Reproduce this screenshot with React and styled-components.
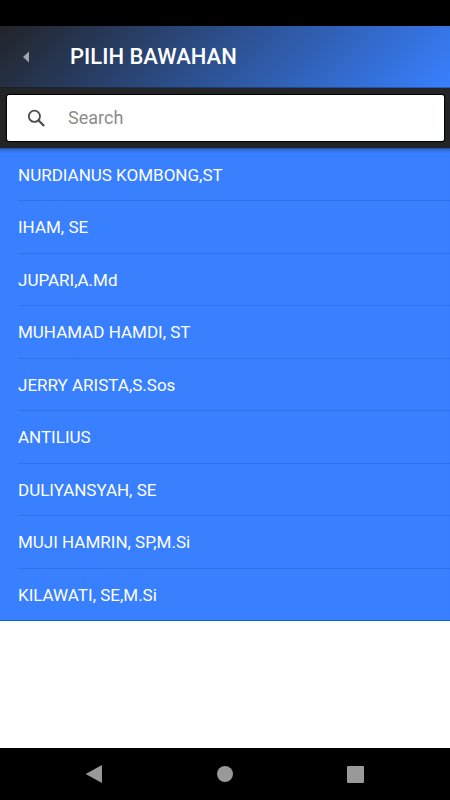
import React, { useState } from "react";
import styled, { createGlobalStyle } from "styled-components";

const GlobalStyle = createGlobalStyle`
  * {
    box-sizing: border-box;
  }

  body {
    margin: 0;
    background-color: white;
    font-family: Roboto, "Liberation Sans", sans-serif;
  }
`;

const Container = styled.div`
  display: flex;
  flex-direction: column;
  min-height: 100vh;
`;

const StatusBar = styled.div`
  height: 26px;
  background-color: black;
`;

const Header = styled.header`
  display: flex;
  align-items: center;
  height: 62px;
  background: linear-gradient(135deg, #222428 0%, #3880ff 100%);
  border-bottom: 1px solid rgba(0, 0, 0, 0.2);
`;

const BackButton = styled.button`
  display: flex;
  align-items: center;
  justify-content: center;
  width: 52px;
  height: 48px;
  padding: 0;
  border: none;
  background: none;
  color: #a0a5ad;
  cursor: pointer;
`;

const Title = styled.h1`
  margin: 0;
  padding-left: 18px;
  font-size: 22px;
  line-height: 26px;
  font-weight: 500;
  color: white;
`;

const SearchBar = styled.div`
  padding: 7px 6px 7px 7px;
  background-color: #222428;
  border-bottom: 1px solid #2b55a0;
`;

const SearchBox = styled.label`
  display: flex;
  align-items: center;
  height: 46px;
  padding-left: 20px;
  border-radius: 2px;
  background-color: white;
  box-shadow: 0 0 1px 1px black;
  color: #4d4d4d;
`;

const SearchInput = styled.input`
  flex: 1;
  min-width: 0;
  height: 44px;
  margin-left: 21px;
  padding: 0 0 2px;
  border: none;
  outline: none;
  background: none;
  font-family: inherit;
  font-size: 18px;
  color: #222428;

  &::placeholder {
    color: #8c8c8c;
    opacity: 1;
  }
`;

const List = styled.ul`
  margin: 0;
  padding: 0;
  list-style: none;
  background-color: #3880ff;
  box-shadow: inset 0 4px 3px -2px rgba(0, 0, 0, 0.2);
`;

const Item = styled.li`
  height: 52px;
  padding-left: 18px;

  &:nth-child(even) {
    height: 53px;
  }

  &:last-child {
    border-bottom: 1px solid #0062e0;
  }
`;

const ItemButton = styled.button`
  display: block;
  width: 100%;
  height: 100%;
  padding: 0;
  border: none;
  border-bottom: 1px solid #3171e0;
  background: none;
  font-family: inherit;
  font-size: 17px;
  text-align: left;
  color: white;
  cursor: pointer;

  ${Item}:last-child & {
    border-bottom: none;
  }
`;

const NavBar = styled.nav`
  display: flex;
  align-items: center;
  justify-content: space-around;
  height: 52px;
  margin-top: auto;
  padding: 0 30px;
  background-color: black;
`;

const NavButton = styled.button`
  display: flex;
  align-items: center;
  justify-content: center;
  width: 48px;
  height: 48px;
  padding: 0;
  border: none;
  background: none;
  color: #999;
  cursor: pointer;
`;

const employees = [
  "NURDIANUS KOMBONG,ST",
  "IHAM, SE",
  "JUPARI,A.Md",
  "MUHAMAD HAMDI, ST",
  "JERRY ARISTA,S.Sos",
  "ANTILIUS",
  "DULIYANSYAH, SE",
  "MUJI HAMRIN, SP,M.Si",
  "KILAWATI, SE,M.Si",
];

const App = () => {
  const [search, setSearch] = useState("");

  const filtered = employees.filter((name) =>
    name.toLowerCase().includes(search.toLowerCase())
  );

  return (
    <Container>
      <GlobalStyle />
      <StatusBar />
      <Header>
        <BackButton aria-label="Back">
          <svg width="8" height="12" viewBox="0 0 8 12" fill="currentColor">
            <path d="M7 .5v11L1 6z" />
          </svg>
        </BackButton>
        <Title>PILIH BAWAHAN</Title>
      </Header>
      <SearchBar>
        <SearchBox>
          <svg width="20" height="20" viewBox="0 0 20 20" fill="none" stroke="currentColor" strokeWidth="1.8">
            <circle cx="7.4" cy="8.3" r="5.6" />
            <path d="M11.4 12.3l5.7 5.7" strokeWidth="2.3" />
          </svg>
          <SearchInput
            type="text"
            placeholder="Search"
            aria-label="Search"
            value={search}
            onChange={(e) => setSearch(e.target.value)}
          />
        </SearchBox>
      </SearchBar>
      <List>
        {filtered.map((name) => (
          <Item key={name}>
            <ItemButton>{name}</ItemButton>
          </Item>
        ))}
      </List>
      <NavBar>
        <NavButton aria-label="Navigate back">
          <svg width="18" height="18" viewBox="0 0 18 18" fill="currentColor">
            <path d="M15 0.5q1-.5 1 .5v16q0 1-1 .5L.5 9.6q-1-.6 0-1.2z" />
          </svg>
        </NavButton>
        <NavButton aria-label="Home">
          <svg width="16" height="16" viewBox="0 0 16 16" fill="currentColor">
            <circle cx="8" cy="8" r="8" />
          </svg>
        </NavButton>
        <NavButton aria-label="Recent apps">
          <svg width="17" height="17" viewBox="0 0 17 17" fill="currentColor">
            <rect width="17" height="17" rx="1" />
          </svg>
        </NavButton>
      </NavBar>
    </Container>
  );
};

export default App;
